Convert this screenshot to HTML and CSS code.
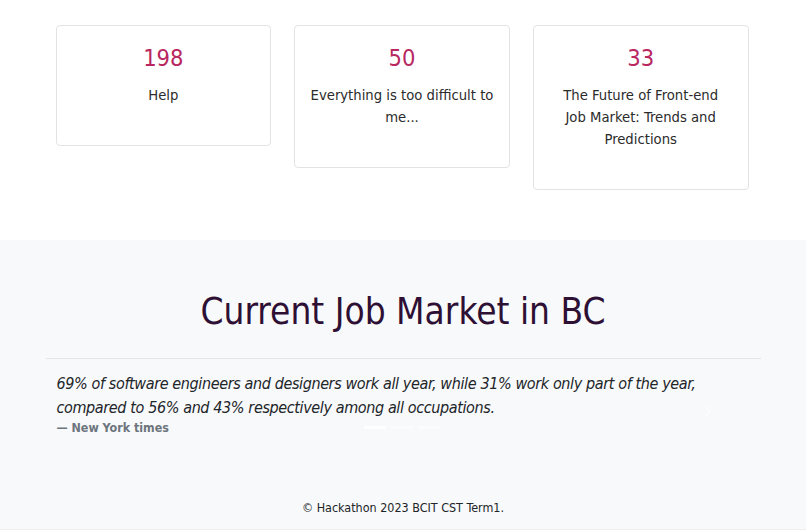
FILE: index.html
```html
<!DOCTYPE html>
<html lang="en">
<head>
<meta charset="utf-8">
<title>Hackathon 2023</title>
<link rel="stylesheet" href="styles.css">
</head>
<body>
<main class="page">
  <section class="stats">
    <div class="stat-card">
      <div class="stat-number">198</div>
      <p class="stat-label">Help</p>
    </div>
    <div class="stat-card">
      <div class="stat-number">50</div>
      <p class="stat-label">Everything is too difficult to me...</p>
    </div>
    <div class="stat-card">
      <div class="stat-number">33</div>
      <p class="stat-label">The Future of Front-end Job&nbsp;Market: Trends and Predictions</p>
    </div>
  </section>

  <section class="market">
    <h1 class="market-title">Current Job Market in BC</h1>
    <hr class="market-rule">
    <div class="carousel">
      <figure class="quote">
        <blockquote class="quote-text">69% of software engineers and designers work all year, while 31% work only part of the year, compared to 56% and 43% respectively among all occupations.</blockquote>
        <figcaption class="quote-source">— New York times</figcaption>
      </figure>
      <div class="indicators">
        <span class="indicator active"></span>
        <span class="indicator"></span>
        <span class="indicator"></span>
      </div>
      <span class="carousel-next">
        <svg width="8" height="13" viewBox="0 0 8 13"><path d="M1.5 1.5 L6.5 6.5 L1.5 11.5" fill="none" stroke="#ffffff" stroke-width="2"/></svg>
      </span>
    </div>
  </section>

  <footer class="site-footer">
    <p class="copyright">© Hackathon 2023 BCIT CST Term1.</p>
  </footer>
</main>
</body>
</html>
```

FILE: styles.css
```css
html, body {
  margin: 0;
  padding: 0;
  background: #ffffff;
}

body {
  font-family: "DejaVu Sans Condensed", "DejaVu Sans", Tahoma, sans-serif;
  font-stretch: condensed;
  font-size: 14.7px;
  line-height: 22px;
  color: #212529;
}

.page {
  display: flex;
  flex-direction: column;
}

.stats {
  width: 693px;
  margin: 0 auto;
  padding: 25px 0 50px;
  display: grid;
  grid-template-columns: repeat(3, 1fr);
  column-gap: 23px;
  align-items: start;
  transform: translateX(-1px);
}

.stat-card {
  border: 1px solid #e2e3e5;
  border-radius: 4px;
  background: #ffffff;
  padding: 18px 14px 39px;
  text-align: center;
}

.stat-number {
  color: #b8275f;
  font-size: 23.5px;
  line-height: 29px;
  margin-bottom: 11px;
}

.stat-label {
  margin: 0;
  color: #2b2b2b;
}

.market {
  background: #f8f9fa;
  padding: 50px 0 0;
  display: flex;
  flex-direction: column;
  align-items: center;
}

.market-title {
  margin: 0;
  font-weight: normal;
  font-size: 36.7px;
  line-height: 44px;
  color: #2e1034;
}

.market-rule {
  width: 715px;
  margin: 24px 0 0;
  border: 0;
  border-top: 1px solid #e4e5e7;
}

.carousel {
  position: relative;
  width: 693px;
  padding-top: 13px;
}

.quote {
  margin: 0;
}

.quote-text {
  margin: 0;
  font-style: italic;
  font-size: 16px;
  line-height: 24px;
  letter-spacing: -0.38px;
  color: #212529;
}

.quote-source {
  font-weight: bold;
  font-size: 12.4px;
  line-height: 16px;
  color: #6c757d;
}

.indicators {
  position: absolute;
  left: 307px;
  top: 67px;
  display: flex;
  gap: 5px;
}

.indicator {
  display: block;
  width: 22px;
  height: 3px;
  background: #ffffff;
  opacity: 0.5;
}

.indicator.active {
  opacity: 1;
}

.carousel-next {
  position: absolute;
  left: 647px;
  top: 46px;
  display: flex;
  opacity: 0.6;
}

.site-footer {
  background: #f8f9fa;
  border-bottom: 1px solid #eceef0;
  padding: 63px 0 12px;
  text-align: center;
}

.copyright {
  margin: 0;
  font-size: 12.45px;
  line-height: 18px;
  color: #212529;
}
```
